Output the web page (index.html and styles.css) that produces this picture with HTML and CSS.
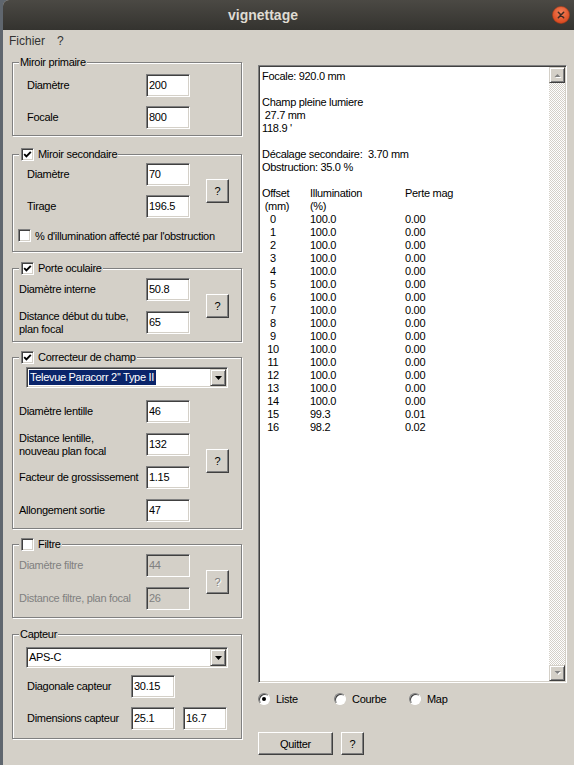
FILE: index.html
```html
<!DOCTYPE html>
<html lang="fr">
<head>
    <meta charset="UTF-8">
    <title>vignettage</title>
    <link rel="stylesheet" href="styles.css">
</head>
<body>
<div class="window">
    <div class="titlebar">
        <span class="title">vignettage</span>
        <span class="close">
            <svg width="18" height="18" viewBox="0 0 18 18">
                <defs>
                    <radialGradient id="closeGrad" cx="50%" cy="35%" r="65%">
                        <stop offset="0" stop-color="#f5825a"/>
                        <stop offset="1" stop-color="#d8461c"/>
                    </radialGradient>
                </defs>
                <circle cx="9" cy="9" r="8.5" fill="url(#closeGrad)" stroke="#a83c19" stroke-width="0.6"/>
                <path d="M6.3 6.3 L11.7 11.7 M11.7 6.3 L6.3 11.7" stroke="#3b2a22" stroke-width="1.5" stroke-linecap="round"/>
            </svg>
        </span>
    </div>

    <div class="menubar">
        <span>Fichier</span>
        <span>?</span>
    </div>

    <div class="content">
        <div class="left">
            <!-- Miroir primaire -->
            <div class="group g1">
                <span class="caption">Miroir primaire</span>
                <div class="fields cols-a">
                    <label class="lab">Diamètre</label><input class="edit" type="text" value="200">
                    <label class="lab">Focale</label><input class="edit" type="text" value="800">
                </div>
            </div>

            <!-- Miroir secondaire -->
            <div class="group g2">
                <span class="caption boxed"><span class="check on"><svg width="9" height="9" viewBox="0 0 9 9"><polyline points="1.2,4.2 3.4,6.4 7.8,1.8" fill="none" stroke="#000" stroke-width="1.9"/></svg></span>Miroir secondaire</span>
                <div class="fields cols-a">
                    <label class="lab">Diamètre</label><input class="edit" type="text" value="70">
                    <label class="lab">Tirage</label><input class="edit" type="text" value="196.5">
                    <button class="btn help">?</button>
                </div>
                <div class="opt"><span class="check"></span>% d'illumination affecté par l'obstruction</div>
            </div>

            <!-- Porte oculaire -->
            <div class="group g3">
                <span class="caption boxed"><span class="check on"><svg width="9" height="9" viewBox="0 0 9 9"><polyline points="1.2,4.2 3.4,6.4 7.8,1.8" fill="none" stroke="#000" stroke-width="1.9"/></svg></span>Porte oculaire</span>
                <div class="fields cols-b">
                    <label class="lab">Diamètre interne</label><input class="edit" type="text" value="50.8">
                    <label class="lab">Distance début du tube,<br>plan focal</label><input class="edit" type="text" value="65">
                    <button class="btn help">?</button>
                </div>
            </div>

            <!-- Correcteur de champ -->
            <div class="group g4">
                <span class="caption boxed"><span class="check on"><svg width="9" height="9" viewBox="0 0 9 9"><polyline points="1.2,4.2 3.4,6.4 7.8,1.8" fill="none" stroke="#000" stroke-width="1.9"/></svg></span>Correcteur de champ</span>
                <div class="combo shift">
                    <span class="combo-text"><span class="sel">Televue Paracorr 2'' Type II</span></span>
                    <span class="combo-btn"><svg width="7" height="4" viewBox="0 0 7 4"><polygon points="0,0 7,0 3.5,4" fill="#000"/></svg></span>
                </div>
                <div class="fields cols-b">
                    <label class="lab">Diamètre lentille</label><input class="edit" type="text" value="46">
                    <label class="lab">Distance lentille,<br>nouveau plan focal</label><input class="edit" type="text" value="132">
                    <label class="lab">Facteur de grossissement</label><input class="edit" type="text" value="1.15">
                    <label class="lab">Allongement sortie</label><input class="edit" type="text" value="47">
                    <button class="btn help help-mid">?</button>
                </div>
            </div>

            <!-- Filtre -->
            <div class="group g5">
                <span class="caption boxed"><span class="check"></span>Filtre</span>
                <div class="fields cols-b off">
                    <label class="lab">Diamètre filtre</label><input class="edit" type="text" value="44" disabled>
                    <label class="lab">Distance filtre, plan focal</label><input class="edit" type="text" value="26" disabled>
                    <button class="btn help" disabled>?</button>
                </div>
            </div>

            <!-- Capteur -->
            <div class="group g6">
                <span class="caption">Capteur</span>
                <div class="combo">
                    <span class="combo-text">APS-C</span>
                    <span class="combo-btn"><svg width="7" height="4" viewBox="0 0 7 4"><polygon points="0,0 7,0 3.5,4" fill="#000"/></svg></span>
                </div>
                <div class="fields cols-c">
                    <label class="lab">Diagonale capteur</label><input class="edit" type="text" value="30.15">
                    <label class="lab">Dimensions capteur</label><input class="edit" type="text" value="25.1"><input class="edit second" type="text" value="16.7">
                </div>
            </div>
        </div>

        <div class="right">
            <div class="output">
                <div class="output-text">
                    <p>Focale: 920.0 mm</p>
                    <p>Champ pleine lumiere<br>&nbsp;27.7 mm<br>118.9 '</p>
                    <p>Décalage secondaire:&nbsp; 3.70 mm<br>Obstruction: 35.0 %</p>
                    <div class="table" id="table">
                        <span>Offset</span><span>Illumination</span><span>Perte mag</span>
                        <span>&nbsp;(mm)</span><span>(%)</span><span></span>
                    </div>
                </div>
                <div class="scrollbar">
                    <span class="sb-btn"><svg width="9" height="6" viewBox="0 0 9 6"><polygon points="1.5,5 4.5,2 7.5,5" fill="#fff" transform="translate(1,1)"/><polygon points="1.5,5 4.5,2 7.5,5" fill="#808080"/></svg></span>
                    <span class="sb-track"></span>
                    <span class="sb-btn"><svg width="9" height="6" viewBox="0 0 9 6"><polygon points="1.5,1 4.5,4 7.5,1" fill="#fff" transform="translate(1,1)"/><polygon points="1.5,1 4.5,4 7.5,1" fill="#808080"/></svg></span>
                </div>
            </div>

            <div class="views">
                <span class="radio-item"><span class="radio on"></span>Liste</span>
                <span class="radio-item"><span class="radio"></span>Courbe</span>
                <span class="radio-item"><span class="radio"></span>Map</span>
            </div>

            <div class="actions">
                <button class="btn quit">Quitter</button>
                <button class="btn help-small">?</button>
            </div>
        </div>
    </div>
</div>

<script>
    // rows of the illumination table
    const rows = [];
    for (let i = 0; i <= 14; i++) rows.push([i, '100.0', '0.00']);
    rows.push([15, '99.3', '0.01']);
    rows.push([16, '98.2', '0.02']);

    const table = document.getElementById('table');
    rows.forEach(r => {
        table.insertAdjacentHTML('beforeend',
            '<span><span class="num">' + r[0] + '</span></span><span>' + r[1] + '</span><span>' + r[2] + '</span>');
    });
</script>
</body>
</html>
```

FILE: styles.css
```css
* {
    box-sizing: border-box;
}

body {
    margin: 0;
    background: #5f666e;
    font-family: 'Liberation Sans', Arial, sans-serif;
    font-size: 11px;
    color: #000;
}

.window {
    margin-left: 3px;
    height: 765px;
    background: #d4d0c8;
    border-radius: 6px 0 0 0;
    overflow: hidden;
}

/* title bar */
.titlebar {
    position: relative;
    height: 30px;
    display: flex;
    align-items: center;
    justify-content: center;
    padding-right: 51px;
    background: linear-gradient(#4b4944, #34332f);
}

.title {
    color: #dfdbd2;
    font-size: 14px;
    font-weight: bold;
}

.close {
    position: absolute;
    right: 4px;
    top: 6px;
    width: 18px;
    height: 18px;
}

.menubar {
    height: 22px;
    display: flex;
    align-items: center;
    gap: 12px;
    padding-left: 6px;
    font-size: 12px;
    color: #333;
}

.content {
    display: flex;
    gap: 16px;
    padding: 10px 0 0 9px;
}

.left {
    width: 230px;
}

.right {
    width: 309px;
    margin-top: 3px;
}

/* group boxes */
.group {
    position: relative;
    border: 1px solid #808080;
    box-shadow: inset 1px 1px 0 #fff, 1px 1px 0 #fff;
    letter-spacing: -0.3px;
}

.caption {
    position: absolute;
    top: -7px;
    left: 6px;
    display: flex;
    align-items: center;
    gap: 4px;
    height: 13px;
    line-height: 13px;
    padding: 0 1px;
    background: #d4d0c8;
}

.caption.boxed {
    padding-left: 2px;
}

.g1 { padding: 11px 0 6px; margin-bottom: 18px; }
.g2 { padding: 8px 0 9px; margin-bottom: 16px; }
.g3 { padding: 9px 0 7px; margin-bottom: 15px; }
.g4 { padding: 9px 0 6px; margin-bottom: 15px; }
.g5 { padding: 9px 0 7px; margin-bottom: 16px; }
.g6 { padding: 12px 0 8px; }

.fields {
    display: grid;
    grid-auto-rows: 23px;
    row-gap: 9px;
    align-items: center;
}

.cols-a {
    grid-template-columns: 119px 44px auto;
    padding-left: 14px;
}

.cols-b {
    grid-template-columns: 127px 44px auto;
    padding-left: 6px;
    row-gap: 10px;
}

.cols-c {
    grid-template-columns: 104px 44px auto;
    padding-left: 14px;
}

.g4 .fields {
    margin-top: 12px;
}

.g6 .fields {
    margin-top: 7px;
}

.lab {
    grid-column: 1;
    line-height: 13px;
    white-space: nowrap;
}

.off .lab {
    color: #808080;
}

.edit {
    grid-column: 2;
    width: 44px;
    height: 23px;
    padding: 0 2px 2px;
    border: 1px solid;
    border-color: #808080 #fff #fff #808080;
    box-shadow: inset 1px 1px 0 #404040, inset -1px -1px 0 #d4d0c8;
    background: #fff;
    font: 11px 'Liberation Sans', Arial, sans-serif;
    letter-spacing: -0.3px;
    color: #000;
    outline: none;
}

.edit:disabled {
    background: #d4d0c8;
    color: #808080;
}

.edit.second {
    grid-column: 3;
    margin-left: 8px;
}

/* buttons */
.btn {
    background: #d4d0c8;
    border: 1px solid;
    border-color: #fff #404040 #404040 #fff;
    box-shadow: inset -1px -1px 0 #808080;
    padding: 0;
    font: 11px 'Liberation Sans', Arial, sans-serif;
    letter-spacing: -0.3px;
    color: #000;
}

.btn:disabled {
    color: #808080;
    text-shadow: 1px 1px 0 #fff;
}

.help {
    grid-column: 3;
    grid-row: 1 / span 2;
    width: 23px;
    height: 24px;
    margin-left: 16px;
}

.help-mid {
    grid-row: 2 / span 2;
}

.opt {
    display: flex;
    align-items: center;
    gap: 4px;
    height: 13px;
    margin-top: 11px;
    padding-left: 5px;
}

/* check boxes */
.check {
    width: 13px;
    height: 13px;
    display: flex;
    align-items: center;
    justify-content: center;
    background: #fff;
    border: 1px solid;
    border-color: #808080 #fff #fff #808080;
    box-shadow: inset 1px 1px 0 #404040, inset -1px -1px 0 #d4d0c8;
}

/* combo boxes */
.combo {
    display: flex;
    align-items: center;
    width: 202px;
    height: 21px;
    margin-left: 13px;
    padding: 1px;
    background: #fff;
    border: 1px solid;
    border-color: #808080 #fff #fff #808080;
    box-shadow: inset 1px 1px 0 #404040, inset -1px -1px 0 #d4d0c8;
}

.combo.shift {
    margin-left: 13px;
}

.combo-text {
    flex: 1;
    padding-left: 1px;
    line-height: 15px;
}

.sel {
    display: inline-block;
    background: #0a246a;
    color: #fff;
    padding: 0 2px 0 1px;
}

.combo-btn {
    width: 16px;
    height: 17px;
    display: flex;
    align-items: center;
    justify-content: center;
    background: #d4d0c8;
    border: 1px solid;
    border-color: #d4d0c8 #404040 #404040 #d4d0c8;
    box-shadow: inset 1px 1px 0 #fff, inset -1px -1px 0 #808080;
}

/* result box */
.output {
    display: flex;
    height: 618px;
    padding: 1px;
    background: #fff;
    border: 1px solid;
    border-color: #808080 #fff #fff #808080;
    box-shadow: inset 1px 1px 0 #404040, inset -1px -1px 0 #d4d0c8;
}

.output-text {
    flex: 1;
    padding: 3px 0 0 2px;
    line-height: 13px;
    letter-spacing: -0.3px;
}

.output-text p {
    margin: 0 0 13px;
}

.table {
    display: grid;
    grid-template-columns: 48px 95px auto;
}

.num {
    display: inline-block;
    width: 22px;
    text-align: center;
}

.scrollbar {
    width: 16px;
    display: flex;
    flex-direction: column;
    background: repeating-conic-gradient(#fff 0 25%, #d4d0c8 0 50%) 0 0 / 2px 2px;
}

.sb-btn {
    height: 16px;
    display: flex;
    align-items: center;
    justify-content: center;
    background: #d4d0c8;
    border: 1px solid;
    border-color: #d4d0c8 #404040 #404040 #d4d0c8;
    box-shadow: inset 1px 1px 0 #fff, inset -1px -1px 0 #808080;
}

.sb-track {
    flex: 1;
}

/* view radios */
.views {
    display: flex;
    align-items: center;
    height: 13px;
    margin-top: 9px;
    letter-spacing: -0.3px;
}

.radio-item {
    display: flex;
    align-items: center;
    gap: 6px;
    width: 75px;
}

.radio-item:first-child {
    width: 76px;
}

.radio {
    position: relative;
    width: 12px;
    height: 12px;
    border-radius: 50%;
    background: #fff;
    border: 1px solid;
    border-color: #808080 #fff #fff #808080;
    box-shadow: inset 1px 1px 0 #404040;
}

.radio.on::after {
    content: '';
    position: absolute;
    left: 3px;
    top: 3px;
    width: 4px;
    height: 4px;
    border-radius: 50%;
    background: #000;
}

.actions {
    display: flex;
    gap: 8px;
    margin-top: 27px;
}

.quit {
    width: 75px;
    height: 23px;
}

.help-small {
    width: 23px;
    height: 23px;
}
```
